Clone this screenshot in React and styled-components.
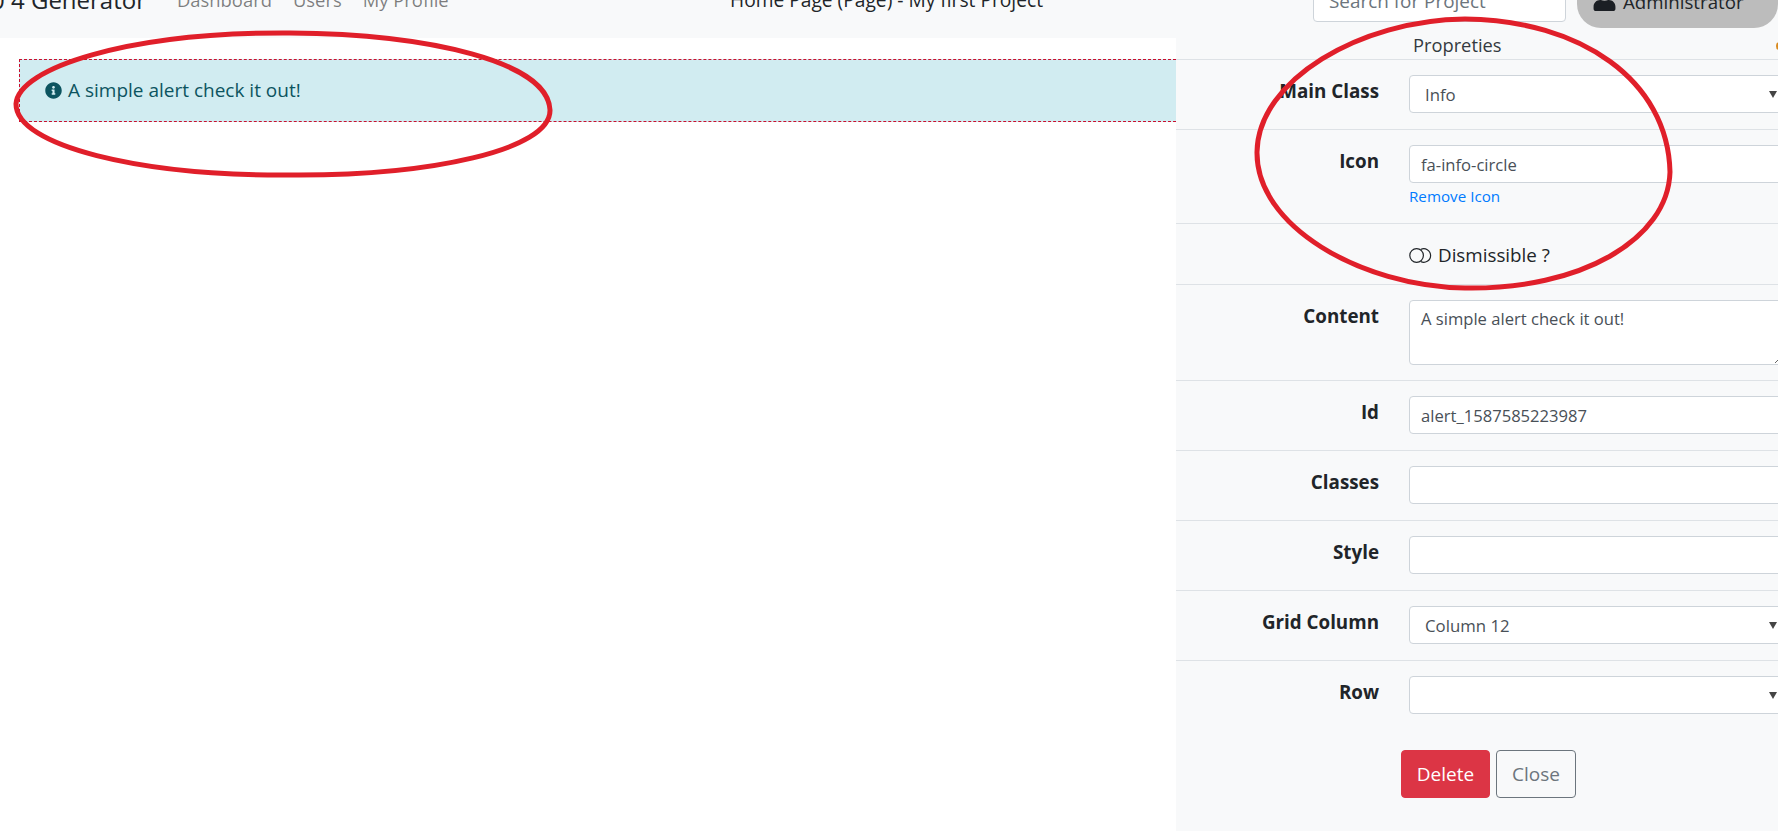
import React from "react";
import styled, { createGlobalStyle } from "styled-components";
import { FaInfoCircle, FaUser } from "react-icons/fa";

const Global = createGlobalStyle`
  html, body { margin: 0; padding: 0; background: #fff; }
  body { font-family: "Open Sans", "Noto Sans", sans-serif; color: #212529; }
  * { box-sizing: border-box; }
`;

const Page = styled.div`
  position: relative;
  width: 1778px;
  height: 831px;
  overflow: hidden;
  display: flex;
  flex-direction: column;
`;

const Navbar = styled.header`
  height: 38px;
  flex: none;
  background: #f8f9fa;
  display: flex;
  align-items: flex-end;
  overflow: hidden;
`;

const Brand = styled.div`
  width: 177px;
  flex: none;
  display: flex;
  justify-content: flex-end;
  padding-right: 31px;
  font-size: 24px;
  line-height: 32px;
  padding-bottom: 22px;
  white-space: nowrap;
`;

const NavLinks = styled.nav`
  width: 553px;
  flex: none;
  display: flex;
  gap: 21px;
  padding-bottom: 26px;
`;

const NavLink = styled.span`
  font-size: 18.4px;
  line-height: 24px;
  color: rgba(0, 0, 0, 0.5);
`;

const PageTitle = styled.div`
  width: 583px;
  flex: none;
  font-size: 19.2px;
  line-height: 24px;
  padding-bottom: 26px;
  color: #212529;
  white-space: nowrap;
`;

const SearchBox = styled.input`
  width: 253px;
  height: 42px;
  flex: none;
  margin-bottom: 16px;
  padding: 0 15px;
  font: 18.9px "Open Sans", sans-serif;
  background: #fff;
  border: 1px solid #ced4da;
  border-radius: 4px;
  &::placeholder { color: #6c757d; opacity: 1; }
`;

const UserPill = styled.div`
  margin-left: 11px;
  width: 201px;
  height: 60px;
  flex: none;
  background: #bcbcbc;
  border-radius: 24px;
  margin-bottom: 10px;
  padding: 0 0 14px 15px;
  display: flex;
  align-items: flex-end;
  gap: 6px;
  font-size: 18.7px;
  line-height: 24px;
  color: #212529;
  svg { margin-bottom: 3px; }
`;

const Caret = styled.span`
  width: 0;
  height: 0;
  margin: 0 0 21px 15px;
  border-left: 4px solid transparent;
  border-right: 4px solid transparent;
  border-top: 5px solid #212529;
`;

const Body = styled.div`
  flex: 1;
  display: flex;
  min-height: 0;
`;

const Canvas = styled.main`
  width: 1176px;
  flex: none;
  padding: 21px 0 0 19px;
`;

const Alert = styled.div`
  height: 63px;
  background: #d1ecf1;
  color: #0c5460;
  border: 1px dashed #c8102e;
  border-right: none;
  padding: 0 0 1px 25px;
  display: flex;
  align-items: center;
  gap: 6px;
  font-size: 19px;
  line-height: 26px;
`;

const Panel = styled.aside`
  flex: 1;
  background: #f8f9fa;
  overflow: hidden;
  position: relative;
`;

const PanelHeader = styled.div`
  height: 22px;
  padding-left: 237px;
  border-bottom: 1px solid #dee2e6;
  font-size: 18.3px;
  line-height: 14px;
  color: #343a40;
`;

const Row = styled.div`
  display: flex;
  align-items: flex-start;
  gap: 30px;
  padding-top: ${(p) => p.$top ?? 15}px;
  height: ${(p) => p.$h ?? 70}px;
  border-bottom: ${(p) => (p.$last ? "none" : "1px solid #dee2e6")};
`;

const Label = styled.label`
  width: 203px;
  flex: none;
  text-align: right;
  font-size: 18.8px;
  font-weight: 700;
  line-height: 32px;
  color: #212529;
`;

const Field = styled.div`
  width: 375px;
  flex: none;
  position: relative;
`;

const TextInput = styled.input`
  display: block;
  width: 100%;
  height: 38px;
  padding: 0 11px;
  font: 16.6px "Open Sans", sans-serif;
  color: #495057;
  background: #fff;
  border: 1px solid #ced4da;
  border-radius: 4px;
`;

const TextArea = styled.textarea`
  display: block;
  width: 100%;
  height: 65px;
  padding: 6px 11px;
  font: 16.6px/24px "Open Sans", sans-serif;
  color: #495057;
  background: #fff;
  border: 1px solid #ced4da;
  border-radius: 4px;
  resize: vertical;
`;

const SelectBox = styled.select`
  display: block;
  width: 100%;
  height: 38px;
  padding: 0 15px;
  font: 16.8px "Open Sans", sans-serif;
  color: #495057;
  background: #fff;
  border: 1px solid #ced4da;
  border-radius: 4px;
  appearance: none;
`;

const SelectArrow = styled.span`
  position: absolute;
  left: 360px;
  top: 16px;
  width: 0;
  height: 0;
  border-left: 4px solid transparent;
  border-right: 4px solid transparent;
  border-top: 7px solid #444;
`;

const RemoveLink = styled.a`
  display: block;
  margin-top: 3px;
  font-size: 15.2px;
  line-height: 20px;
  color: #007bff;
`;

const ToggleLine = styled.div`
  display: flex;
  align-items: center;
  gap: 6px;
  margin-top: 6px;
  font-size: 18.8px;
  line-height: 26px;
  color: #212529;
`;

const Actions = styled.div`
  display: flex;
  gap: 6px;
  padding: 19px 0 0 225px;
`;

const Button = styled.button`
  height: 48px;
  width: ${(p) => p.$w}px;
  font: 19px "Open Sans", sans-serif;
  border-radius: 4px;
  padding: 0;
  color: ${(p) => (p.$danger ? "#fff" : "#6c757d")};
  background: ${(p) => (p.$danger ? "#dc3545" : "transparent")};
  border: 1px solid ${(p) => (p.$danger ? "#dc3545" : "#6c757d")};
`;

const EdgeDot = styled.span`
  position: absolute;
  left: 600px;
  top: 4px;
  width: 6px;
  height: 8px;
  border-radius: 50%;
  background: #d98a1e;
`;

const Annotations = styled.svg`
  position: absolute;
  inset: 0;
  pointer-events: none;
`;

function SelectField({ value }) {
  return (
    <Field>
      <SelectBox defaultValue={value}>
        <option>{value}</option>
      </SelectBox>
      <SelectArrow />
    </Field>
  );
}

function InputRow({ label, value }) {
  return (
    <Row>
      <Label>{label}</Label>
      <Field>
        <TextInput defaultValue={value} />
      </Field>
    </Row>
  );
}

export default function App() {
  return (
    <Page>
      <Global />
      <Navbar>
        <Brand>0 4 Generator</Brand>
        <NavLinks>
          <NavLink>Dashboard</NavLink>
          <NavLink>Users</NavLink>
          <NavLink>My Profile</NavLink>
        </NavLinks>
        <PageTitle>Home Page (Page) - My first Project</PageTitle>
        <SearchBox placeholder="Search for Project" />
        <UserPill>
          <FaUser size={25} color="#1b1f24" />
          Administrator
          <Caret />
        </UserPill>
      </Navbar>
      <Body>
        <Canvas>
          <Alert>
            <FaInfoCircle size={17} />
            A simple alert check it out!
          </Alert>
        </Canvas>
        <Panel>
          <EdgeDot />
          <PanelHeader>Propreties</PanelHeader>
          <Row>
            <Label>Main Class</Label>
            <SelectField value="Info" />
          </Row>
          <Row $h={94}>
            <Label>Icon</Label>
            <Field>
              <TextInput defaultValue="fa-info-circle" />
              <RemoveLink>Remove Icon</RemoveLink>
            </Field>
          </Row>
          <Row $h={61} $top={12}>
            <Label />
            <ToggleLine>
              <svg width="23" height="15" viewBox="0 0 23 15" fill="none" stroke="#212529" strokeWidth="1.2">
                <circle cx="7.6" cy="7.5" r="6.8" />
                <path d="M11.6 1.5 A6.8 6.8 0 1 1 11.6 13.5" />
              </svg>
              Dismissible ?
            </ToggleLine>
          </Row>
          <Row $h={96}>
            <Label>Content</Label>
            <Field>
              <TextArea defaultValue="A simple alert check it out!" />
            </Field>
          </Row>
          <InputRow label="Id" value="alert_1587585223987" />
          <InputRow label="Classes" value="" />
          <InputRow label="Style" value="" />
          <Row>
            <Label>Grid Column</Label>
            <SelectField value="Column 12" />
          </Row>
          <Row $last>
            <Label>Row</Label>
            <SelectField value="" />
          </Row>
          <Actions>
            <Button $danger $w={89}>Delete</Button>
            <Button $w={80}>Close</Button>
          </Actions>
        </Panel>
      </Body>
      <Annotations width="1778" height="831" viewBox="0 0 1778 831" fill="none" stroke="#e01f2a" strokeWidth="5">
        <path d="M16 104 C18 68 128 32 290 33 C430 34 548 62 550 110 C551 150 430 176 290 175 C140 176 16 146 16 104 Z" />
        <path d="M1257 152 C1258 80 1360 20 1465 19 C1580 20 1668 80 1670 172 C1668 240 1580 290 1465 288 C1360 286 1256 226 1257 152 Z" />
      </Annotations>
    </Page>
  );
}
